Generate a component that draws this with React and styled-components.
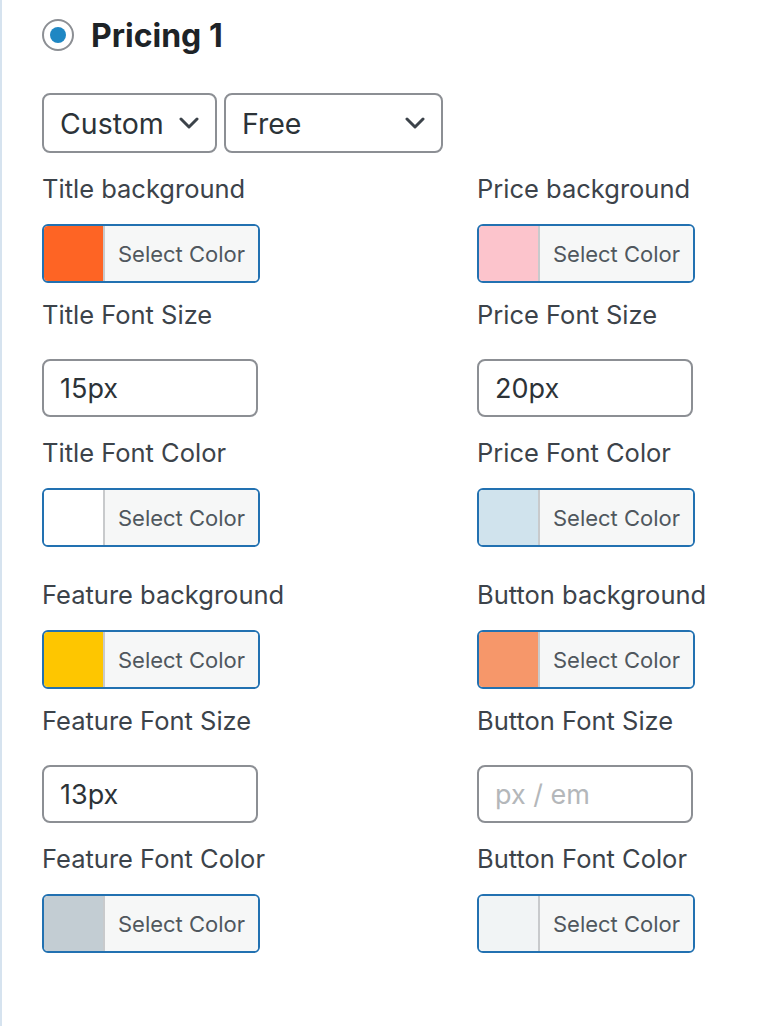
import React from "react";
import styled, { createGlobalStyle } from "styled-components";

const GlobalStyle = createGlobalStyle`
  html, body { margin: 0; padding: 0; background: #fff; }
  body { font-family: Inter, "Noto Sans", "Liberation Sans", sans-serif; }
  * { box-sizing: border-box; }
`;

const Page = styled.div`
  border-left: 2px solid #d6e3ef;
  min-height: 1026px;
  padding: 15px 0 0 40px;
`;

const Header = styled.div`
  display: flex;
  align-items: center;
  gap: 17px;
  height: 40px;
`;

const Radio = styled.span`
  width: 32px;
  height: 32px;
  border-radius: 50%;
  border: 2px solid #8c8f94;
  display: flex;
  align-items: center;
  justify-content: center;
  &::after {
    content: "";
    width: 16px;
    height: 16px;
    border-radius: 50%;
    background: #1f87c3;
  }
`;

const Title = styled.h3`
  margin: 0;
  font-size: 32px;
  font-weight: 700;
  color: #1d2327;
`;

const SelectRow = styled.div`
  display: flex;
  gap: 7px;
  margin-top: 38px;
`;

const SelectBox = styled.div`
  width: ${(p) => p.$width}px;
  height: 60px;
  border: 2px solid #8c8f94;
  border-radius: 8px;
  padding: 0 16px 0 16px;
  display: flex;
  align-items: center;
  justify-content: space-between;
  font-size: 28.5px;
  color: #2c3338;
`;

const Chevron = () => (
  <svg width="20" height="12" viewBox="0 0 20 12" fill="none">
    <polyline points="2,2 10,10 18,2" stroke="#3c434a" strokeWidth="3" strokeLinecap="round" strokeLinejoin="round" />
  </svg>
);

const Grid = styled.div`
  display: grid;
  grid-template-columns: 435px 1fr;
  margin-top: 18px;
`;

const Field = styled.div`
  display: flex;
  flex-direction: column;
  align-items: flex-start;
  gap: ${(p) => (p.$kind === "size" ? 26 : 17)}px;
  margin-bottom: ${(p) => (p.$groupEnd ? 30 : p.$kind === "size" ? 18 : 14)}px;
`;

const Label = styled.label`
  font-size: 25.5px;
  line-height: 36px;
  color: #3c434a;
`;

const ColorButton = styled.div`
  display: flex;
  width: 218px;
  height: 59px;
  border: 2px solid #2271b1;
  border-radius: 6px;
  overflow: hidden;
`;

const Swatch = styled.span`
  width: 61px;
  background: ${(p) => p.$color};
  border-right: 2px solid #c8cacc;
`;

const ButtonText = styled.span`
  flex: 1;
  display: flex;
  align-items: center;
  justify-content: center;
  background: #f6f7f7;
  font-size: 22px;
  color: #50575e;
`;

const SizeInput = styled.input`
  width: 216px;
  height: 58px;
  border: 2px solid #8c8f94;
  border-radius: 8px;
  padding: 0 16px;
  font-family: inherit;
  font-size: 27px;
  color: #2c3338;
  background: #fff;
  outline: none;
  &::placeholder { color: #b4b7ba; }
`;

const fields = [
  { label: "Title background", kind: "color", color: "#fe6424" },
  { label: "Price background", kind: "color", color: "#fcc4cc" },
  { label: "Title Font Size", kind: "size", value: "15px" },
  { label: "Price Font Size", kind: "size", value: "20px" },
  { label: "Title Font Color", kind: "color", color: "#ffffff", groupEnd: true },
  { label: "Price Font Color", kind: "color", color: "#d0e3ed", groupEnd: true },
  { label: "Feature background", kind: "color", color: "#fec600" },
  { label: "Button background", kind: "color", color: "#f6976a" },
  { label: "Feature Font Size", kind: "size", value: "13px" },
  { label: "Button Font Size", kind: "size", value: "" },
  { label: "Feature Font Color", kind: "color", color: "#c3cdd3" },
  { label: "Button Font Color", kind: "color", color: "#f1f4f5" },
];

export default function App() {
  return (
    <>
      <GlobalStyle />
      <Page>
        <Header>
          <Radio />
          <Title>Pricing 1</Title>
        </Header>
        <SelectRow>
          <SelectBox $width={175}>
            <span>Custom</span>
            <Chevron />
          </SelectBox>
          <SelectBox $width={219}>
            <span>Free</span>
            <Chevron />
          </SelectBox>
        </SelectRow>
        <Grid>
          {fields.map((f) => (
            <Field key={f.label} $kind={f.kind} $groupEnd={f.groupEnd}>
              <Label>{f.label}</Label>
              {f.kind === "color" ? (
                <ColorButton>
                  <Swatch $color={f.color} />
                  <ButtonText>Select Color</ButtonText>
                </ColorButton>
              ) : (
                <SizeInput defaultValue={f.value} placeholder="px / em" />
              )}
            </Field>
          ))}
        </Grid>
      </Page>
    </>
  );
}
